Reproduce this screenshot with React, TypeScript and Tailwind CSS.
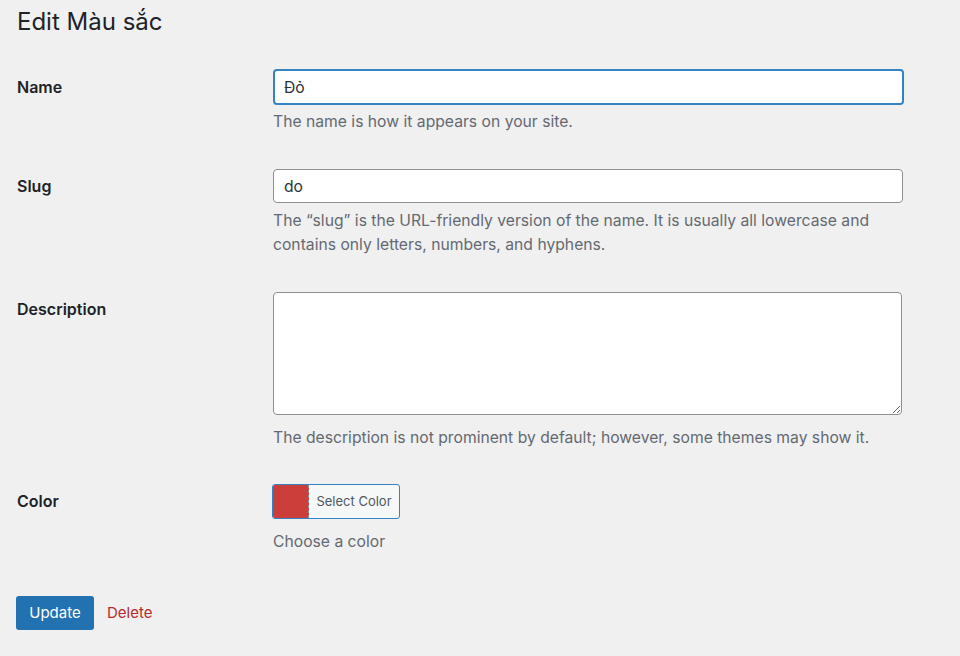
import {FC, useState} from 'react';

const Row: FC<{label: string; children: React.ReactNode; className?: string; labelClass?: string}> = ({label, children, className, labelClass}) => (
  <div className={`flex items-start ${className ?? ''}`}>
    <div className={`w-[273px] shrink-0 pl-[17px] text-[16px] leading-6 font-semibold text-[#1d2327] ${labelClass ?? 'pt-[5px]'}`}>{label}</div>
    <div className="flex-1">{children}</div>
  </div>
);

const Help: FC<{children: React.ReactNode; className?: string}> = ({children, className}) => (
  <p className={`text-[15.7px] leading-6 text-[#646970] ${className ?? ''}`}>{children}</p>
);

export default function App() {
  const [name, setName] = useState('Đỏ');
  const [slug, setSlug] = useState('do');
  const [desc, setDesc] = useState('');

  return (
    <div className="h-[656px] w-[960px] overflow-hidden bg-[#f0f0f1] font-['Inter','Liberation_Sans',sans-serif] text-[#1d2327]">
      <h1 className="pl-[17px] pt-[7px] text-[24px] leading-[30px] font-normal">Edit Màu sắc</h1>

      {/* Name */}
      <Row label="Name" className="mt-[32px]" labelClass="pt-[6px]">
        <div className="w-[631px]">
          <input
            className="h-[36px] w-full rounded-[4px] border-2 border-[#3582c4] bg-white px-[9px] text-[15.7px] text-[#2c3338] outline-none"
            onChange={e => setName(e.target.value)}
            value={name}
          />
          <Help className="mt-[5px]">The name is how it appears on your site.</Help>
        </div>
      </Row>

      {/* Slug */}
      <Row label="Slug" className="mt-[35px]">
        <div className="w-[630px]">
          <input
            className="h-[34px] w-full rounded-[4px] border border-[#8c8f94] bg-white px-[10px] text-[15.7px] text-[#2c3338] outline-none"
            onChange={e => setSlug(e.target.value)}
            value={slug}
          />
          <Help className="mt-[6px] pr-[20px]">The “slug” is the URL-friendly version of the name. It is usually all lowercase and contains only letters, numbers, and hyphens.</Help>
        </div>
      </Row>

      {/* Description */}
      <Row label="Description" className="mt-[35px]">
        <div className="w-[629px]">
          <textarea
            className="block h-[123px] w-full rounded-[4px] border border-[#8c8f94] bg-white px-[10px] py-[6px] text-[15.7px] text-[#2c3338] outline-none"
            onChange={e => setDesc(e.target.value)}
            value={desc}
          />
          <Help className="mt-[11px]">The description is not prominent by default; however, some themes may show it.</Help>
        </div>
      </Row>

      {/* Color */}
      <Row label="Color" className="mt-[34px]">
        <div className="-ml-px">
          <button
            className="flex h-[35px] w-[128px] overflow-hidden rounded-[3px] border border-[#3582c4] bg-[#f6f7f7]"
            type="button"
          >
            <span className="h-full w-[36px] border-r border-dashed border-[#8c8f94] bg-[#cc3e3a]" />
            <span className="flex h-full flex-1 items-center justify-center text-[13px] text-[#50575e]">Select Color</span>
          </button>
          <Help className="mt-[11px] pl-px">Choose a color</Help>
        </div>
      </Row>

      {/* Actions */}
      <div className="mt-[42px] flex items-center gap-[13px] pl-[16px]">
        <button className="h-[34px] w-[78px] rounded-[3px] bg-[#2271b1] text-[15px] text-white" type="button">Update</button>
        <a className="text-[15px] text-[#b32d2e]" href="#">Delete</a>
      </div>
    </div>
  );
}
